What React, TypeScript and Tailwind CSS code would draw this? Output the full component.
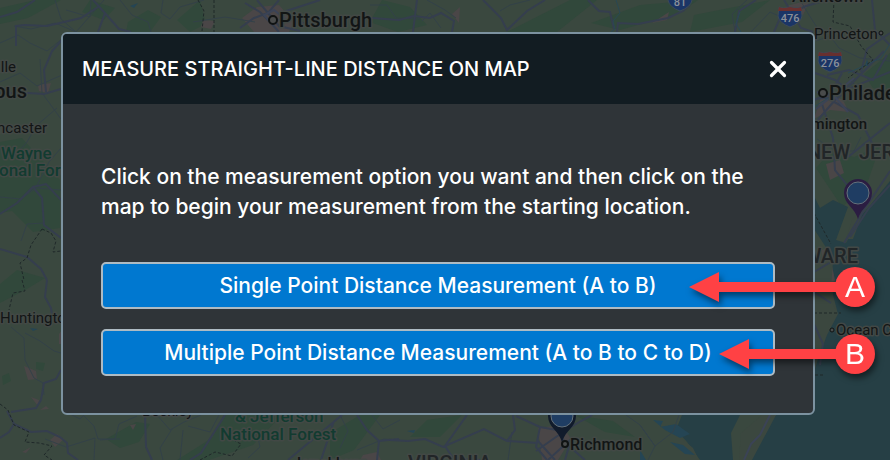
import { X } from 'lucide-react'
import { twMerge } from 'tailwind-merge'

const options = [
  { label: 'Single Point Distance Measurement (A to B)', mark: 'A', width: 'w-[186px]' },
  { label: 'Multiple Point Distance Measurement (A to B to C to D)', mark: 'B', width: 'w-[156px]' },
]

const cities = [
  { name: 'Pittsburgh', x: 279, y: 27, size: 20, weight: 500 },
  { name: 'Allentown', x: 792, y: 2, size: 16, weight: 500 },
  { name: 'Princeton', x: 814, y: 39, size: 15, weight: 400 },
  { name: 'Philadelphia', x: 829, y: 100, size: 20, weight: 500 },
  { name: 'Wilmington', x: 867, y: 129, size: 15, weight: 500, end: true },
  { name: 'Ocean City', x: 836, y: 335, size: 15, weight: 400 },
  { name: 'Richmond', x: 570, y: 450, size: 16, weight: 500 },
  { name: 'Asheville', x: 16, y: 72, size: 15, weight: 400, end: true },
  { name: 'Columbus', x: 27, y: 98, size: 20, weight: 500, end: true },
  { name: 'Lancaster', x: 47, y: 133, size: 15, weight: 400, end: true },
  { name: 'Huntington', x: 0, y: 323, size: 15, weight: 400 },
  { name: 'Beckley', x: 142, y: 416, size: 15, weight: 400 },
  { name: 'Lynchburg', x: 297, y: 468, size: 15, weight: 500 },
]

const regions = [
  { name: 'NEW', x: 850, y: 159, end: true },
  { name: 'JERSEY', x: 859, y: 159, end: false },
  { name: 'DELAWARE', x: 858, y: 263, end: true },
  { name: 'VIRGINIA', x: 408, y: 470, end: false },
]

const forests = [
  { name: 'Wayne', x: 1, y: 159, size: 17 },
  { name: 'onal Forest', x: -1, y: 176, size: 17 },
  { name: '& Jefferson', x: 235, y: 422, size: 17 },
  { name: 'National Forest', x: 220, y: 440, size: 17 },
]

function Shield({ x, y, label }: { x: number; y: number; label: string }) {
  return (
    <g transform={`translate(${x} ${y})`}>
      <path d="M-11-9Q-7-7 0-9Q7-7 11-9L12 0Q11 7 0 11Q-11 7-12 0Z" fill="#1b3566" stroke="#3d4a55" />
      <path d="M-11-9Q-7-7 0-9Q7-7 11-9L12-5H-12Z" fill="#68302f" />
      <text y="6" textAnchor="middle" fontSize="11" fontWeight="500" fill="#8b919a">
        {label}
      </text>
    </g>
  )
}

function Pin({ x, y, color }: { x: number; y: number; color: string }) {
  return (
    <g transform={`translate(${x} ${y})`}>
      <path d="M0 0C-3-11-14-15-14-26A14 14 0 0 1 14-26C14-15 3-11 0 0Z" fill={color} />
      <circle cy="-26" r="11" fill="#1f3d63" stroke="#65717a" />
    </g>
  )
}

function MapBackdrop() {
  return (
    <svg
      aria-hidden="true"
      viewBox="0 0 890 460"
      preserveAspectRatio="xMidYMid slice"
      className="absolute inset-0 -z-10 h-full w-full font-[Roboto,sans-serif]"
    >
      <rect width="890" height="460" fill="#3a483f" />

      {/* woodland */}
      <g fill="#31483b">
        <path d="M0 8L35 0H61L28 18L0 24ZM90 0L115 8L104 20L82 12ZM128 22L148 10L161 17L150 32H126ZM200 0L206 24L190 32L177 20Z" />
        <path d="M0 142L22 138L60 180V228L33 232L12 211L0 213ZM0 284L17 270L45 278L27 289L0 303Z" />
        <path d="M382 0L410 7L427 25L398 32L370 22ZM507 32L570 0H597L557 32ZM591 23L640 5L698 0L678 14L620 30ZM694 15L770 0L742 22L690 32Z" />
        <path d="M177 460L212 438L224 415H282L253 445L209 460ZM330 433L360 415H380L354 450L330 460ZM410 437L427 420L462 415L440 437ZM575 415L613 421L635 437L605 432ZM106 439L136 422L150 424L139 442L120 448Z" />
        <path d="M816 168L831 151L854 157L880 146L866 187L842 207ZM864 74L890 53V92L873 88ZM36 362L45 363L43 371L36 369ZM2 376L9 373L11 381L3 385Z" />
      </g>

      {/* towns */}
      <g fill="#4a4647">
        <path d="M24 366L36 371L37 379L28 380ZM31 397L39 400L38 406ZM40 410L46 406L49 409ZM50 440L57 434L64 439L55 447ZM22 452L31 447L26 453ZM59 334L62 330V344H59Z" />
        <path d="M257 7L279 5L294 22L289 32H254L242 18ZM203 20L215 21L211 29L201 27ZM452 14L460 7L459 23ZM652 23L669 12L667 20ZM786 6L810 0L803 15ZM823 91L843 100L849 112L830 110L814 119ZM538 428L562 425L571 439L558 460H542ZM363 455L377 452L381 460H360ZM38 85L51 83L48 93L39 91ZM130 425L136 424L133 430ZM826 164L840 160L844 173L830 180ZM822 250L835 245L836 280L822 285Z" />
      </g>

      {/* ocean and bays */}
      <g fill="#263f45">
        <path d="M890 181L872 203L860 217L846 243L836 240L848 207L833 200L820 208L814 196V229L829 252L835 280L830 310L822 349L815 365L806 415H776L757 437L741 460H890Z" />
        <path d="M730 415H740L731 433L733 460H700L687 442L676 430L682 415Z" />
      </g>
      <g fill="#3b473f">
        <path d="M739 460L741 433L762 415H776L767 432L752 460ZM680 437L693 448L699 460H680ZM814 255L833 262L831 287L838 314L827 335L818 359L814 372Z" />
        <path d="M846 239L852 220L873 194L878 190L862 215L853 239Z" />
      </g>
      <g fill="#254554">
        <path d="M653 420L663 421L660 427L676 424L690 434L680 438L665 430ZM670 442L683 445L695 455L685 454ZM640 450L646 460H640ZM865 66L867 59L869 66ZM130 6L138 3L134 8ZM407 431L415 430L414 433ZM30 328L38 329L33 331Z" />
      </g>

      {/* minor roads */}
      <g fill="none" stroke="#334148">
        <path d="M0 43L18 35L30 43L47 51L62 39M14 26L31 29L55 23L76 32L104 0M55 0L61 19L76 32M66 10L90 17L91 0M120 0L132 15L148 22L151 32M163 0L161 13L170 19L180 7L204 0M193 22L225 17L255 22M0 82L20 73L37 86L62 75M40 59L42 93L61 119M0 197L21 199L36 188L61 190M13 158L27 142L36 126L57 108M36 187L49 162L61 148M44 223L27 224L21 241" />
        <path d="M11 327L24 338L25 360L34 378L43 383M25 333L40 341L54 351L61 353M43 383L44 395M70 414L80 419L85 414M82 414L94 426L98 439L120 439M45 439L66 447L95 438L94 460" />
        <path d="M370 5L387 5L396 18L420 19M427 0L445 10L456 18M422 21L430 13L441 28M500 11L510 5L530 0M735 32L732 14L747 0M751 32L770 12L790 21M800 0L809 15L820 32M816 41L830 36L839 48L860 58L890 61M833 99L850 81L878 100L890 96M817 139L836 151L854 151L861 137" />
        <path d="M100 440L115 439L119 424L137 416M157 415L170 430L184 422L201 415M172 429L160 448L163 460M183 430L180 460M188 426L210 432L219 415M248 458L260 447L257 433M340 415L348 431L340 448M357 450L384 439L400 440M372 415L383 429L400 420M512 432L508 460M626 415L640 425L655 446L673 432L679 415M640 425L655 446L648 460" />
      </g>

      {/* highways */}
      <g fill="none" stroke="#353e4e" strokeWidth="2">
        <path d="M0 17L17 12L35 0M16 46V26L25 25L47 26L81 18L98 7M93 0L104 12L119 29L131 32M105 13L98 32M46 92L44 70L52 51L62 40M0 93H28L44 94L61 89M0 214L17 203L33 187L42 198L44 225L61 238M33 187L46 184L61 200M0 249L27 257L41 269L47 280M47 280L45 297L51 308L52 314M61 370L56 379L44 383L41 400L36 408L11 412" />
        <path d="M0 438L9 432L14 424L7 411M14 424L31 432L47 431L60 437L67 443L68 453L78 460M145 415L146 447L152 460M225 415L201 453L190 460M342 415L300 450L288 460M334 421L321 460M357 415L367 430L379 441L399 439M379 441L377 460" />
        <path d="M245 3L260 12L270 22L279 32M279 0L268 13L254 18L240 28M257 0L279 26L300 31M280 13L320 0M293 22L324 25M372 18L399 20L414 16L430 18L441 13L454 21L452 32M417 0L413 32M483 0L501 18L507 30L527 11L545 0M588 0L599 11L610 12L614 29M617 32L618 23L638 24L668 18L683 11L690 5M735 32L739 11L756 0M774 32L780 18L806 6L827 0M784 0L801 28L813 32" />
        <path d="M390 440L408 441L425 439L443 447L484 429L507 441L538 443M467 415L445 446L453 458L480 460M513 415L515 430L507 441M516 416L540 427L557 430L569 448M540 427L536 447L547 460M536 451L566 430L581 421L592 415M548 460L571 439L565 460M556 415L563 441L585 460M537 440L555 460" />
        <path d="M815 99L834 97L850 85L884 51M815 73L835 80L850 91M817 121L835 100L850 88L890 72M822 104L833 138L835 170L847 185M842 73L831 93L814 100M827 98L858 115L873 145M848 157L890 123M844 243L864 210L890 171M850 237L869 208L890 185M827 75L849 70L873 80L887 55M861 72L867 49L890 33M872 0L875 30L890 45M814 324L823 344L820 365M814 292L831 303M814 272L831 262" />
      </g>
      <g fill="none" stroke="#3b4356" strokeWidth="2">
        <path d="M816 109L826 101L836 93L854 78M817 92L835 97L848 112M744 460L751 444L760 435L770 415M274 10L284 18L271 23L264 15Z" />
      </g>
      <g fill="none" stroke="#294854">
        <path d="M616 0L620 13L613 21L615 29L611 32M740 12L736 24L741 32M848 73L881 58L890 44M814 107L828 98" />
      </g>

      {/* state borders */}
      <g fill="none" stroke="#1f2829" strokeDasharray="3 2">
        <path d="M198 0L204 11L202 31M214 0V32M834 0L833 22L850 26L861 46L873 60L848 78M22 280L25 291L13 293L9 310M42 229L31 245L27 258L20 263L24 280M42 229L51 233L56 241L53 252L61 251M0 404L8 410L14 425L29 432L25 442L39 443L52 446L44 455L52 460M200 460L215 452L232 456L241 444L235 441M814 213L831 244M814 313L841 313M815 375H823" />
      </g>

      <g stroke="#424845" strokeWidth="3" strokeLinejoin="round" paintOrder="stroke">
        {cities.map((city) => (
          <text
            key={city.name}
            x={city.x}
            y={city.y}
            fontSize={city.size}
            fontWeight={city.weight}
            textAnchor={city.end ? 'end' : 'start'}
            fill="#121515"
          >
            {city.name}
          </text>
        ))}
        {regions.map((region) => (
          <text
            key={region.name}
            x={region.x}
            y={region.y}
            fontSize="20"
            fontWeight="500"
            textAnchor={region.end ? 'end' : 'start'}
            fill="#212527"
          >
            {region.name}
          </text>
        ))}
        {forests.map((forest) => (
          <text key={forest.name} x={forest.x} y={forest.y} fontSize={forest.size} fill="#123b30">
            {forest.name}
          </text>
        ))}
      </g>

      <Shield x={680} y={0} label="81" />
      <Shield x={790} y={16} label="476" />
      <Shield x={830} y={61} label="276" />
      <Pin x={858} y={219} color="#2b1d42" />
      <Pin x={562} y={442} color="#111b2b" />

      <g fill="#494b4b" stroke="#101313" strokeWidth="2">
        <circle cx="273" cy="20" r="4" />
        <circle cx="823" cy="93" r="4" />
        <circle cx="565" cy="444" r="3" />
        <circle cx="881" cy="33" r="2" strokeWidth="1" />
        <circle cx="832" cy="330" r="2" strokeWidth="1" />
      </g>
    </svg>
  )
}

function Callout({ mark, className }: { mark: string; className: string }) {
  return (
    <div
      className={twMerge(
        'pointer-events-none absolute -right-[100px] top-[5px] flex items-center drop-shadow-[2px_4px_3px_rgba(0,0,0,0.5)]',
        className
      )}
    >
      <svg aria-hidden="true" viewBox="0 0 30 30" className="h-[30px] w-[30px] shrink-0 fill-[#ff4144]">
        <path d="M0 15L30 0V30Z" />
      </svg>
      <span className="h-[10px] grow bg-[#ff4144]" />
      <span className="-ml-1 flex h-10 w-10 shrink-0 items-center justify-center rounded-full bg-[#ff4144] font-['Liberation_Sans',sans-serif] text-[30px] leading-10 text-white">
        {mark}
      </span>
    </div>
  )
}

export default function App() {
  return (
    <main className="relative isolate min-h-screen overflow-hidden pb-11 pl-[61px] pr-[75px] pt-8 font-[Inter,sans-serif] font-medium text-white">
      <MapBackdrop />
      <section
        role="dialog"
        aria-labelledby="measure-title"
        className="rounded-md border-2 border-[#7c92a0] bg-[#2f3438]"
      >
        <header className="flex h-[70px] items-center justify-between rounded-t-sm bg-[#121c22] pl-[19px] pr-[22px]">
          <h2 id="measure-title" className="text-[20px] leading-[30px]">
            MEASURE STRAIGHT-LINE DISTANCE ON MAP
          </h2>
          <button type="button" aria-label="Close" className="flex h-[26px] w-[26px] items-center justify-center">
            <X className="h-[26px] w-[26px]" strokeWidth={3} />
          </button>
        </header>
        <div className="px-[38px] pb-[37px] pt-[58px]">
          <p className="text-[21px] leading-[30px]">
            Click on the measurement option you want and then click on the map to begin your measurement from the
            starting location.
          </p>
          <div className="mt-10 flex flex-col gap-5">
            {options.map((option) => (
              <div key={option.mark} className="relative">
                <button
                  type="button"
                  className="h-[47px] w-full rounded-[5px] border-2 border-[#aebbc3] bg-[#0078d0] text-[21px] leading-[30px]"
                >
                  {option.label}
                </button>
                <Callout mark={option.mark} className={option.width} />
              </div>
            ))}
          </div>
        </div>
      </section>
    </main>
  )
}
